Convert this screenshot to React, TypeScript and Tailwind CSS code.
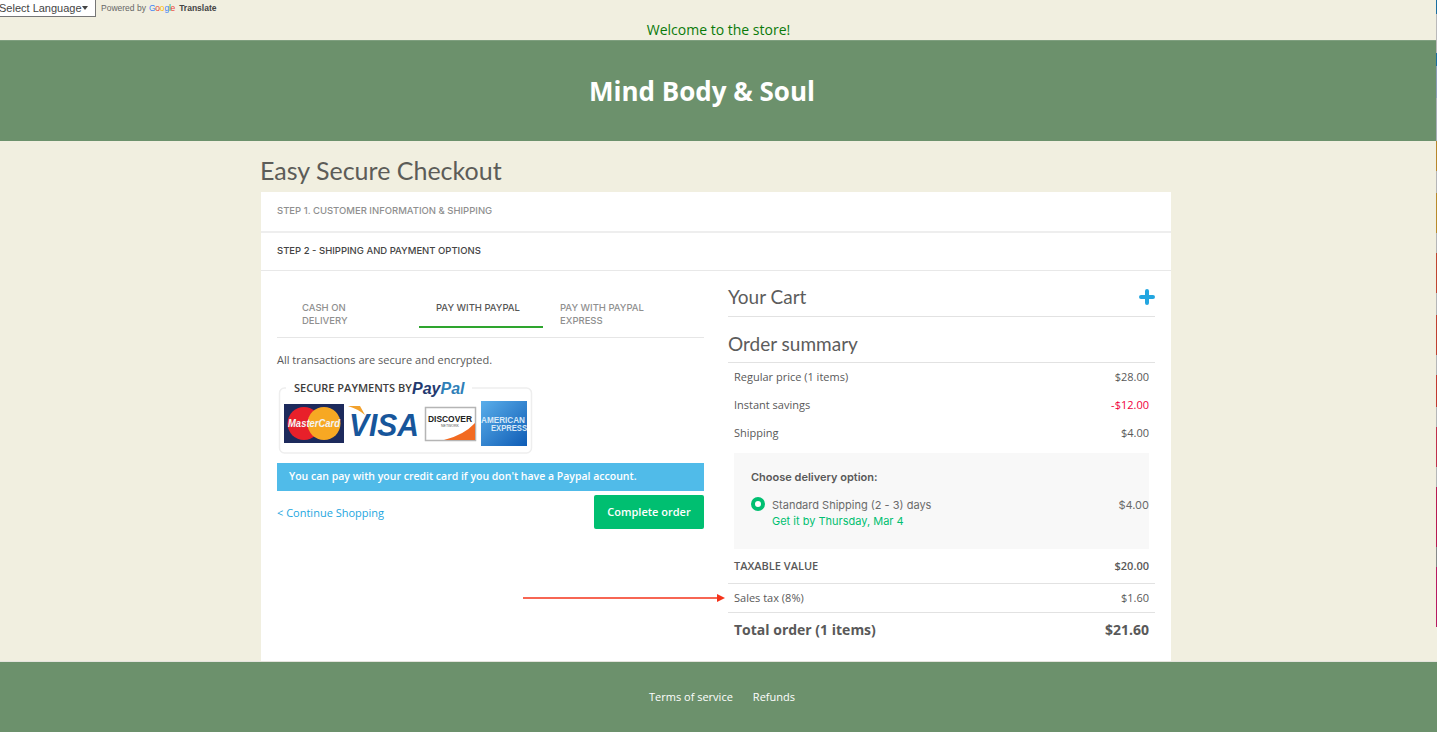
const edgeColors = [
  ['#1a6ea0', 14], ['#b9b9b9', 39], ['#1a6ea0', 13], ['#8c9fb8', 32], ['#a9b0b8', 43], ['#b8862a', 30], ['#b5b5b5', 22],
  ['#b98a2a', 40], ['#b5b5b5', 20], ['#c0452f', 40], ['#b5b5b5', 22], ['#c0402f', 40], ['#b5b5b5', 20], ['#c2392f', 32],
  ['#b5b5b5', 20], ['#c0304a', 40], ['#b5b5b5', 20], ['#b81a50', 60], ['#888888', 20], ['#b81a60', 60],
] as const;

const PaypalBadge = () => (
  <svg width="256" height="74" viewBox="0 0 256 74" className="block">
    <rect x="1.5" y="7" width="252" height="65" rx="5" fill="#fff" stroke="#eeeeee" strokeWidth="1.5" />
    <rect x="8" y="0" width="186" height="14" fill="#fff" />
    <text x="16" y="11" fontFamily="Open Sans" fontSize="11" fontWeight="600" fill="#3d3d3d">SECURE PAYMENTS BY</text>
    <text x="134" y="13" fontFamily="Liberation Sans" fontSize="16" fontWeight="700" fontStyle="italic">
      <tspan fill="#233a70">Pay</tspan><tspan fill="#2f7fb8">Pal</tspan>
    </text>

    {/* mastercard */}
    <rect x="6" y="23" width="60" height="39" fill="#1d2a5c" />
    <circle cx="26" cy="42.5" r="16.5" fill="#e8202a" />
    <circle cx="46" cy="42.5" r="16.5" fill="#f7a823" />
    <text x="36" y="46" textAnchor="middle" fontFamily="Liberation Sans" fontSize="10.5" fontWeight="700" fontStyle="italic" fill="#f4f4f4" textLength="52" lengthAdjust="spacingAndGlyphs">MasterCard</text>

    {/* visa */}
    <path d="M70 25 L82 25 L87 34 Q80 28 70 25 Z" fill="#f2a12c" />
    <text x="106" y="55" textAnchor="middle" fontFamily="Liberation Sans" fontSize="31" fontWeight="700" fontStyle="italic" fill="#17569b" textLength="70" lengthAdjust="spacingAndGlyphs">VISA</text>

    {/* discover */}
    <rect x="147.5" y="26.5" width="50" height="33" fill="#fff" stroke="#b5b5b5" strokeWidth="1.5" />
    <path d="M166 59 Q186 54 197 42 L197 59 Z" fill="#f26a21" />
    <text x="172" y="41" textAnchor="middle" fontFamily="Liberation Sans" fontSize="9" fontWeight="700" fill="#222" textLength="44" lengthAdjust="spacingAndGlyphs">DISCOVER</text>
    <text x="172" y="46" textAnchor="middle" fontFamily="Liberation Sans" fontSize="3.5" fill="#555">NETWORK</text>

    {/* amex */}
    <defs>
      <linearGradient id="amex" x1="0" y1="0" x2="1" y2="1">
        <stop offset="0" stopColor="#5aaeea" />
        <stop offset="1" stopColor="#0f5cb5" />
      </linearGradient>
    </defs>
    <rect x="203" y="20" width="46" height="45" fill="url(#amex)" />
    <text x="203" y="42" fontFamily="Liberation Sans" fontSize="8.5" fontWeight="700" fill="#d6e8f8" textLength="44" lengthAdjust="spacingAndGlyphs">AMERICAN</text>
    <text x="213" y="50" fontFamily="Liberation Sans" fontSize="8.5" fontWeight="700" fill="#d6e8f8" textLength="36" lengthAdjust="spacingAndGlyphs">EXPRESS</text>
  </svg>
);

const SummaryRow = ({ label, value, valueClass = '' }: { label: string; value: string; valueClass?: string }) => (
  <div className="flex justify-between items-center h-[28px] px-[6px] text-[11px]">
    <span>{label}</span>
    <span className={valueClass}>{value}</span>
  </div>
);

const App = () => {
  return (
    <div className="relative h-[732px] w-[1437px] overflow-hidden bg-[#f1efe0] font-['Open_Sans',sans-serif] text-[#595959]">
      {/* Google translate */}
      <div className="flex items-start h-[17px] font-['Liberation_Sans',sans-serif]">
        <div className="flex items-center justify-between w-[97px] h-[17px] pr-[7px] -ml-[1px] bg-white border-r border-b border-[#767676] text-[11px] text-[#444]">
          <span>Select Language</span>
          <span className="w-0 h-0 border-x-[3.5px] border-x-transparent border-t-[4px] border-t-[#444]" />
        </div>
        <div className="flex items-center h-[17px] ml-[5px] text-[8.5px] text-[#666]">
          <span>Powered by</span>
          <span className="ml-[3px] font-medium tracking-[-0.2px]">
            <span className="text-[#4285f4]">G</span><span className="text-[#ea4335]">o</span><span className="text-[#fbbc05]">o</span><span className="text-[#4285f4]">g</span><span className="text-[#34a853]">l</span><span className="text-[#ea4335]">e</span>
          </span>
          <span className="ml-[4px] font-bold text-[#444]">Translate</span>
        </div>
      </div>

      <div className="flex justify-center items-center h-[23px] pt-[2px] text-[14px] text-[#0a7a0a]">Welcome to the store!</div>

      {/* Header */}
      <header className="flex items-center justify-center h-[101px] bg-[#6c916c] border-t border-[#7f9f7f]">
        <h1 className="ml-[-33px] text-[26px] font-bold text-white">Mind Body &amp; Soul</h1>
      </header>

      <main className="h-[520px] w-[911px] ml-[260px]">
        <h2 className="h-[51px] pt-[12px] font-['Lato',sans-serif] text-[25px] leading-[35px] text-[#5c5c58]">Easy Secure Checkout</h2>

        <div className="h-[469px] ml-[1px] bg-white">
          <div className="flex items-center h-[41px] pl-[16px] border-b-2 border-[#eeeeee] font-['Inter',sans-serif] text-[9.5px] font-medium text-[#8f8f8f]">
            STEP 1. CUSTOMER INFORMATION &amp; SHIPPING
          </div>
          <div className="flex items-center h-[38px] pl-[16px] border-b border-[#e8e8e8] font-['Inter',sans-serif] text-[9.5px] font-medium text-[#444]">
            STEP 2 - SHIPPING AND PAYMENT OPTIONS
          </div>

          <div className="flex justify-between px-[16px]">
            {/* Left column */}
            <section className="w-[427px] pt-[20px]">
              <div className="flex h-[47px] border-b border-[#e6e6e6] font-['Inter',sans-serif] text-[9.5px] leading-[13px] font-medium text-[#8f8f8f]">
                <div className="w-[142px] pl-[25px] pt-[10px] w-[142px]">CASH ON<br />DELIVERY</div>
                <div className="w-[124px] h-[37px] pl-[17px] pt-[10px] border-b-2 border-[#2ea52e] text-[#555]">PAY WITH PAYPAL</div>
                <div className="pl-[17px] pt-[10px]">PAY WITH PAYPAL<br />EXPRESS</div>
              </div>

              <p className="mt-[14px] text-[11px] leading-[16px]">All transactions are secure and encrypted.</p>

              <div className="mt-[13px] ml-[1px]">
                <PaypalBadge />
              </div>

              <div className="flex items-center h-[28px] mt-[8px] pl-[12px] bg-[#50bbe9] text-[10.5px] font-semibold text-white">
                You can pay with your credit card if you don't have a Paypal account.
              </div>

              <div className="flex justify-between items-center mt-[4px]">
                <a className="mt-[2px] text-[11px] text-[#23a6e0]">&lt; Continue Shopping</a>
                <button className="w-[110px] h-[34px] rounded-[2px] bg-[#00bf71] text-[11px] font-semibold text-white">Complete order</button>
              </div>
            </section>

            {/* Right column */}
            <section className="relative w-[427px]">
              <div className="flex justify-between items-center h-[46px] pt-[8px] border-b border-[#e2e2e2]">
                <h3 className="font-['Lato',sans-serif] text-[19px] text-[#5c5c5c]">Your Cart</h3>
                <svg width="16" height="16" viewBox="0 0 16 16" className="mr-0 -mt-[2px]">
                  <path d="M8 2v12M2 8h12" stroke="#23a6e0" strokeWidth="4" strokeLinecap="round" />
                </svg>
              </div>
              <div className="flex items-center h-[46px] pt-[9px] border-b border-[#e2e2e2]">
                <h3 className="font-['Lato',sans-serif] text-[19px] text-[#5c5c5c]">Order summary</h3>
              </div>

              <SummaryRow label="Regular price (1 items)" value="$28.00" />
              <SummaryRow label="Instant savings" value="-$12.00" valueClass="text-[#f0003c]" />
              <SummaryRow label="Shipping" value="$4.00" />

              <div className="h-[96px] mt-[6px] mx-[6px] pt-[17px] pl-[17px] bg-[#f8f8f8] font-['Inter',sans-serif] text-[11px]">
                <p className="font-semibold leading-[14px]">Choose delivery option:</p>
                <div className="flex mt-[13px]">
                  <span className="w-[14px] h-[14px] mt-[0px] rounded-full border-[4px] border-[#00bf71] bg-white" />
                  <div className="flex-1 ml-[7px] leading-[16px]">
                    <div className="flex justify-between"><span className="text-[#6a6a6a]">Standard Shipping (2 - 3) days</span><span className="text-[#6a6a6a]">$4.00</span></div>
                    <div className="text-[#00bf71]">Get it by Thursday, Mar 4</div>
                  </div>
                </div>
              </div>

              <div className="flex justify-between items-center h-[35px] px-[6px] border-b border-[#e2e2e2] text-[11px] font-semibold">
                <span>TAXABLE VALUE</span><span>$20.00</span>
              </div>
              <div className="flex justify-between items-center h-[29px] px-[6px] border-b border-[#e2e2e2] text-[11px]">
                <span>Sales tax (8%)</span><span>$1.60</span>
              </div>
              <div className="flex justify-between items-center h-[32px] px-[6px] text-[14px] font-bold">
                <span>Total order (1 items)</span><span>$21.60</span>
              </div>

              {/* annotation arrow */}
              <svg width="204" height="10" viewBox="0 0 204 10" className="absolute left-[-205px] top-[322px]">
                <path d="M0 5H196" stroke="#f5331a" strokeWidth="1.5" />
                <path d="M194 1l8 4-8 4z" fill="#f5331a" />
              </svg>
            </section>
          </div>
        </div>
      </main>

      {/* Footer */}
      <footer className="flex items-center justify-center gap-[20px] h-[71px] bg-[#6c916c] border-t border-[#e4e4dc] pl-[7px] text-[11px] text-white">
        <a>Terms of service</a>
        <a>Refunds</a>
      </footer>

      {/* sliver of the desktop behind the window */}
      <div className="absolute right-0 top-0 flex flex-col w-[1px] h-[732px]">
        {edgeColors.map(([color, height], i) => (
          <div key={i} style={{ backgroundColor: color, height }} />
        ))}
      </div>
    </div>
  );
};

export default App;
